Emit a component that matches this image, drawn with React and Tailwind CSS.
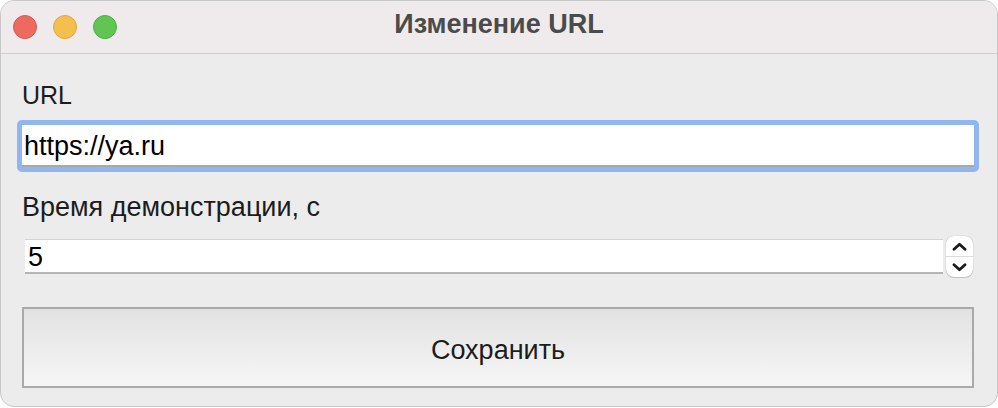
import React from 'react';

export default function App() {
  return (
    <div className="w-[998px] h-[408px] bg-white" style={{ fontFamily: '"Liberation Sans", Arial, sans-serif' }}>
      <div className="w-[998px] h-[407px] rounded-[14px] overflow-hidden bg-[#ececec] border border-[#c8c8c8] flex flex-col">
        {/* Title bar */}
        <div className="h-[53px] shrink-0 bg-[#efebec] border-b border-[#cfcfcf] flex items-center relative">
          <div className="flex items-center gap-[16px] pl-[12px]">
            <span className="w-[24px] h-[24px] rounded-full bg-[#ed6a5e] border border-[#d65a4e]" />
            <span className="w-[24px] h-[24px] rounded-full bg-[#f5bf4f] border border-[#dca83e]" />
            <span className="w-[24px] h-[24px] rounded-full bg-[#61c554] border border-[#4fae44]" />
          </div>
          <div className="absolute inset-0 pb-[5px] flex items-center justify-center text-[27px] font-bold text-[#4b4b4b] pointer-events-none">
            Изменение URL
          </div>
        </div>

        {/* Body */}
        <div className="flex flex-col px-[16px] pt-[26px]">
          <div className="pl-[5px] text-[25px] text-[#1c1c1c] leading-[30px]">URL</div>
          <div className="mt-[10px] mr-[2px] rounded-[5px] bg-[#8fb6ee] p-[5px]">
            <div className="h-[42px] bg-white border-b-2 border-[#a9a9a9] flex items-center pl-[2px] pt-[3px] text-[27px] text-black">
              https://ya.ru
            </div>
          </div>
          <div className="mt-[20px] pl-[5px] text-[27px] text-[#1c1c1c] leading-[30px]">Время демонстрации, с</div>
          <div className="mt-[14px] flex items-center pl-[8px] pr-[8px] gap-[3px]">
            <div className="flex-1 h-[35px] bg-white border-t border-[#d4d4d4] border-b-2 border-b-[#b5b5b5] flex items-center pl-[3px] pt-[2px] text-[27px] text-black">
              5
            </div>
            <div className="w-[27px] h-[41px] rounded-[8px] bg-white shadow-[0_0_1px_rgba(0,0,0,0.35),0_1px_1px_rgba(0,0,0,0.15)] flex flex-col">
              <div className="flex-1 flex items-center justify-center border-b border-[#dcdcdc]">
                <svg width="15" height="9" viewBox="0 0 15 9" fill="none">
                  <path d="M2 7.2L7.5 2.2L13 7.2" stroke="#1a1a1a" strokeWidth="2.8" strokeLinecap="round" strokeLinejoin="round" />
                </svg>
              </div>
              <div className="flex-1 flex items-center justify-center">
                <svg width="15" height="9" viewBox="0 0 15 9" fill="none">
                  <path d="M2 1.8L7.5 6.8L13 1.8" stroke="#1a1a1a" strokeWidth="2.8" strokeLinecap="round" strokeLinejoin="round" />
                </svg>
              </div>
            </div>
          </div>
          <div className="mt-[30px] ml-[5px] mr-[7px] h-[81px] border-2 border-[#aaaaaa] bg-gradient-to-b from-[#e2e2e2] to-[#f6f6f6] flex items-center justify-center pt-[6px] text-[27px] text-[#1c1c1c]">
            Сохранить
          </div>
        </div>
      </div>
    </div>
  );
}
